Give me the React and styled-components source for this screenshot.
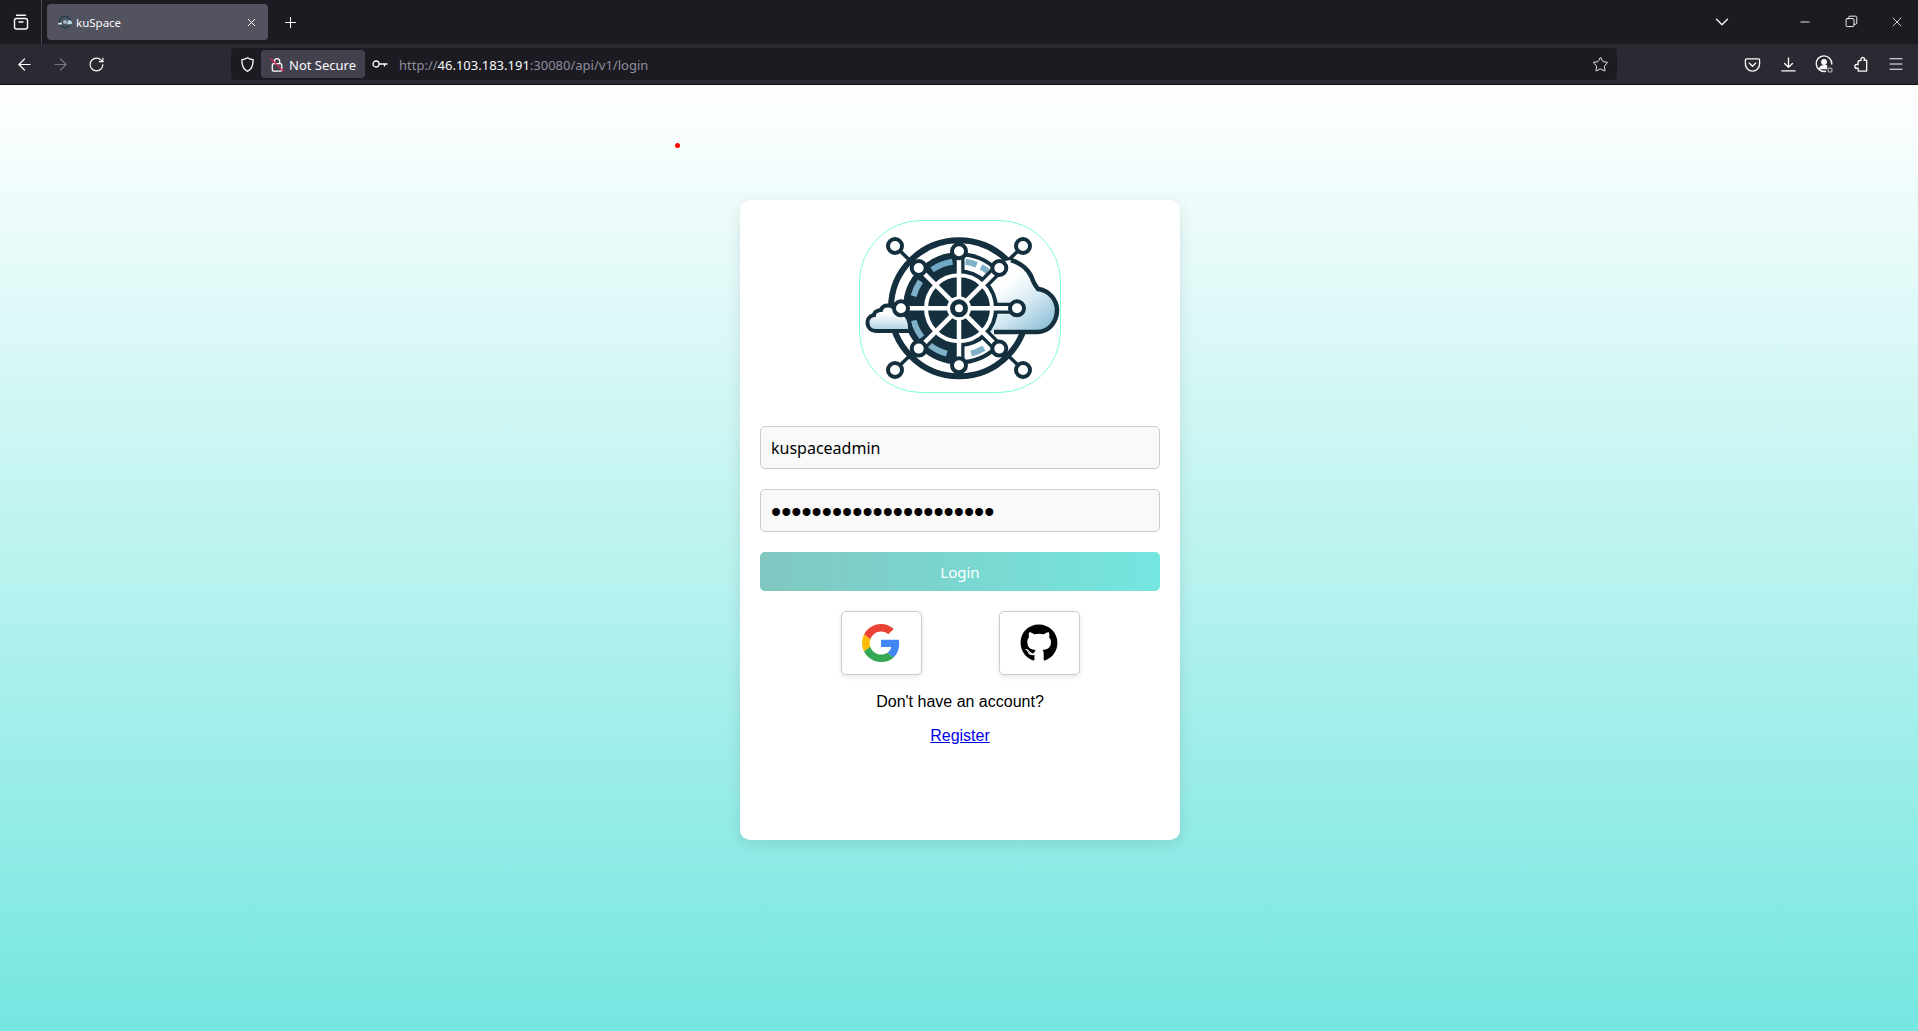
import React from 'react';
import styled, { createGlobalStyle } from 'styled-components';
import { ArrowLeft, ArrowRight, RotateCw, Star, Menu, ChevronDown, Minus, X, Plus } from 'lucide-react';
import { FaGithub } from 'react-icons/fa';

const GlobalStyle = createGlobalStyle`
  html, body {
    margin: 0;
    padding: 0;
    width: 1918px;
    height: 1031px;
    overflow: hidden;
    font-family: "Liberation Sans", Arial, sans-serif;
  }
  * { box-sizing: border-box; }
`;

const Window = styled.div`
  display: flex;
  flex-direction: column;
  width: 1918px;
  height: 1031px;
  overflow: hidden;
`;

/* browser chrome */
const TabBar = styled.div`
  display: flex;
  align-items: center;
  height: 44px;
  margin-right: -2px;
  background: #1c1b22;
  color: #fbfbfe;
  font-family: "Noto Sans", sans-serif;
`;

const ViewButton = styled.div`
  display: flex;
  align-items: center;
  justify-content: center;
  width: 42px;
  height: 44px;
  margin-right: 5px;
  border-right: 1px solid #4a4a52;
`;

const Tab = styled.div`
  display: flex;
  align-items: center;
  width: 221px;
  height: 36px;
  padding: 0 10px;
  gap: 3px;
  border-radius: 4px;
  background: #53535f;
  font-size: 11.5px;
`;

const TabTitle = styled.span`
  flex: 1;
`;

const NewTab = styled.div`
  display: flex;
  align-items: center;
  justify-content: center;
  width: 44px;
`;

const Spacer = styled.div`
  flex: 1;
`;

const WinButton = styled.div`
  display: flex;
  align-items: center;
  justify-content: center;
  width: ${props => props.$w || 46}px;
  margin-top: -1px;
`;

const ToolBar = styled.div`
  display: flex;
  align-items: center;
  height: 41px;
  padding-left: 6px;
  background: #2b2a33;
  border-bottom: 1px solid #0c0c0d;
  color: #fbfbfe;
  font-family: "Noto Sans", sans-serif;
`;

const ToolIcon = styled.div`
  display: flex;
  align-items: center;
  justify-content: center;
  width: 36px;
  height: 32px;
  color: ${props => (props.$dim ? '#75747b' : '#fbfbfe')};
`;

const UrlBar = styled.div`
  display: flex;
  align-items: center;
  width: 1386px;
  height: 32px;
  margin-left: 117px;
  margin-right: 117px;
  padding: 0 8px 0 2px;
  border-radius: 4px;
  background: #1c1b22;
`;

const ShieldSlot = styled.div`
  display: flex;
  align-items: center;
  justify-content: center;
  width: 28px;
`;

const SecurityBox = styled.div`
  display: flex;
  align-items: center;
  gap: 3px;
  width: 104px;
  height: 28px;
  padding: 1px 0 0 8px;
  border-radius: 4px;
  background: #42414d;
  font-size: 13px;
  white-space: nowrap;
`;

const KeySlot = styled.div`
  display: flex;
  align-items: center;
  margin: 0 11px 0 7px;
`;

const UrlText = styled.div`
  flex: 1;
  padding-top: 1px;
  font-size: 13px;
  color: #8f8f9d;
  white-space: nowrap;
`;

const Host = styled.span`
  color: #fbfbfe;
`;

/* login page */
const Page = styled.main`
  flex: 1;
  position: relative;
  display: flex;
  justify-content: center;
  padding: 115px 0 0 2px;
  background: linear-gradient(to bottom, #ffffff 0%, #75e6e0 100%);
`;

const RedDot = styled.div`
  position: absolute;
  left: 675px;
  top: 58px;
  width: 5px;
  height: 5px;
  border-radius: 50%;
  background: #f00;
`;

const Card = styled.section`
  display: flex;
  flex-direction: column;
  align-items: center;
  width: 440px;
  height: 640px;
  padding: 20px;
  border-radius: 10px;
  background: #fff;
  box-shadow: 0 4px 15px rgba(0, 0, 0, 0.1);
`;

const LogoFrame = styled.div`
  width: 202px;
  height: 173px;
  margin-bottom: 33px;
  border: 1px solid #7fffd4;
  border-radius: 62px;
  background: #fff;
  overflow: hidden;
`;

const Field = styled.input`
  width: 400px;
  height: 43px;
  margin-bottom: 20px;
  padding: 0 10px;
  border: 1px solid #ccc;
  border-radius: 5px;
  background: #f9f9f9;
  color: #000;
  font-family: "Noto Sans", sans-serif;
  font-size: 16px;
  outline: none;
`;

const PasswordField = styled(Field)`
  padding-top: 3px;
  font-family: "Liberation Sans", sans-serif;
  font-size: 29px;
`;

const LoginButton = styled.button`
  width: 400px;
  height: 39px;
  margin-bottom: 20px;
  border: none;
  border-radius: 5px;
  background: linear-gradient(to right, #80c7c0, #75e6e0);
  color: #fff;
  font-family: "Noto Sans", sans-serif;
  font-size: 15px;
`;

const SocialRow = styled.div`
  display: flex;
  justify-content: center;
  gap: 77px;
  margin-bottom: 18px;
`;

const SocialButton = styled.button`
  display: flex;
  align-items: center;
  justify-content: center;
  width: 81px;
  height: 64px;
  padding: 0;
  border: 1px solid #ccc;
  border-radius: 5px;
  background: #fff;
  box-shadow: 0 2px 5px rgba(0, 0, 0, 0.1);
`;

const Prompt = styled.p`
  margin: 0 0 16px;
  font-size: 16px;
  line-height: 18px;
  color: #000;
`;

const RegisterLink = styled.a`
  font-size: 16px;
  line-height: 18px;
  color: #00e;
  text-decoration: underline;
`;

const Icon = ({ size = 18, children, sw = 1.4 }) => (
  <svg width={size} height={size} viewBox="0 0 18 18" fill="none" stroke="currentColor" strokeWidth={sw} strokeLinecap="round" strokeLinejoin="round">
    {children}
  </svg>
);

const CX = 100;
const CY = 88.3;
const DARK = '#14303f';

const polar = (r, a) => [CX + r * Math.cos((a * Math.PI) / 180), CY + r * Math.sin((a * Math.PI) / 180)];

// clockwise arc from angle a0 to a1, in degrees
const arc = (r, a0, a1) => {
  const [x0, y0] = polar(r, a0);
  const [x1, y1] = polar(r, a1);
  return `M${x0} ${y0}A${r} ${r} 0 ${a1 - a0 > 180 ? 1 : 0} 1 ${x1} ${y1}`;
};

const wheelNodes = [0, 45, 90, 135, 180, 225, 270, 315].map(a => polar(a % 180 === 0 ? 58 : 57, a));
const outerNodes = [[36, 26], [164, 26], [36, 150], [164, 150]];
const dashes = [[142, 165], [195, 215], [235, 262], [278, 292], [298, 308], [58, 75], [105, 130]];

function Logo() {
  return (
    <svg width="200" height="171" viewBox="1 1 200 171">
      <defs>
        <linearGradient id="cloudA" x1="0.2" y1="0.1" x2="0.9" y2="1">
          <stop offset="0.2" stopColor="#ffffff" />
          <stop offset="0.55" stopColor="#d5e9f2" />
          <stop offset="1" stopColor="#86bad4" />
        </linearGradient>
        <linearGradient id="cloudB" x1="0" y1="0" x2="0" y2="1">
          <stop offset="0.3" stopColor="#ffffff" />
          <stop offset="1" stopColor="#a9cfe0" />
        </linearGradient>
      </defs>
      {outerNodes.map(([x, y]) => (
        <g key={x + '-' + y}>
          <line x1={x} y1={y} x2={CX} y2={CY} stroke={DARK} strokeWidth="3.5" />
          <circle cx={x} cy={y} r="7" fill="#fff" stroke={DARK} strokeWidth="4" />
        </g>
      ))}
      <circle cx={CX} cy={CY} r="68" fill="#fff" stroke={DARK} strokeWidth="6" />
      <path d="M128 44 L152 40 C162 43 170 50 173 58 C174 62 176 65 179 69 C190 70 198 80 198 90 C198 102 190 112 178 112 L125 112 Z" fill="url(#cloudA)" />
      <path d="M152 40 C162 43 170 50 173 58 C174 62 176 65 179 69 C190 70 198 80 198 90 C198 102 190 112 178 112 L135 112" fill="none" stroke={DARK} strokeWidth="4.5" />
      {/* dark band on the left half, thin arcs on the right */}
      <path d={arc(46.5, 90, 270)} fill="none" stroke={DARK} strokeWidth="19" />
      <path d={arc(54, 270, 315)} fill="none" stroke={DARK} strokeWidth="4" />
      <path d={arc(54, 45, 90)} fill="none" stroke={DARK} strokeWidth="4" />
      {dashes.map(([a0, a1]) => (
        <path key={a0} d={arc(47, a0, a1)} fill="none" stroke={a0 === 235 ? '#6fa9c4' : '#7fb0c8'} strokeWidth="6" />
      ))}
      {wheelNodes.map(([x, y], i) => (
        <line key={i} x1={x} y1={y} x2={CX} y2={CY} stroke={DARK} strokeWidth="11" />
      ))}
      <circle cx={CX} cy={CY} r="39" fill={DARK} />
      <circle cx={CX} cy={CY} r="33" fill={DARK} stroke="#fff" strokeWidth="4" />
      {wheelNodes.map(([x, y], i) => (
        <line key={i} x1={x} y1={y} x2={CX} y2={CY} stroke="#fff" strokeWidth="4.5" />
      ))}
      <path d="M22 90 C24 84 34 84 37 91 C45 91 52 98 51 111 L17 111 C7 111 5 97 15 95 C15 92 19 90 22 90 Z" fill="url(#cloudB)" stroke={DARK} strokeWidth="4" />
      {wheelNodes.map(([x, y], i) => (
        <circle key={i} cx={x} cy={y} r="7" fill="#fff" stroke={DARK} strokeWidth="4" />
      ))}
      <circle cx={CX} cy={CY} r="12" fill="#fff" />
      <circle cx={CX} cy={CY} r="6.5" fill="#fff" stroke={DARK} strokeWidth="5" />
    </svg>
  );
}

function GoogleIcon() {
  return (
    <svg width="38" height="38" viewBox="0 0 48 48">
      <path fill="#EA4335" d="M24 9.5c3.54 0 6.71 1.22 9.21 3.6l6.85-6.85C35.9 2.38 30.47 0 24 0 14.62 0 6.51 5.38 2.56 13.22l7.98 6.19C12.43 13.72 17.74 9.5 24 9.5z" />
      <path fill="#4285F4" d="M46.98 24.55c0-1.57-.15-3.09-.38-4.55H24v9.02h12.94c-.58 2.96-2.26 5.48-4.78 7.18l7.73 6c4.51-4.18 7.09-10.36 7.09-17.65z" />
      <path fill="#FBBC05" d="M10.53 28.59c-.48-1.45-.76-2.99-.76-4.59s.27-3.14.76-4.59l-7.98-6.19C.92 16.46 0 20.12 0 24c0 3.88.92 7.54 2.56 10.78l7.97-6.19z" />
      <path fill="#34A853" d="M24 48c6.48 0 11.93-2.13 15.89-5.81l-7.73-6c-2.15 1.45-4.92 2.3-8.16 2.3-6.26 0-11.57-4.22-13.47-9.91l-7.98 6.19C6.51 42.62 14.62 48 24 48z" />
    </svg>
  );
}

function FavIcon() {
  return (
    <svg width="16" height="16" viewBox="0 0 16 16">
      <circle cx="8" cy="8" r="5.6" fill="none" stroke="#23414f" strokeWidth="1.6" />
      <circle cx="8" cy="8" r="2" fill="#9fb6c0" />
      <path d="M11 6.5c2-.8 4 .3 4 2.2 0 1-.7 1.6-1.6 1.6H10z" fill="#b6d8e6" />
      <path d="M1 10.2c0-1 1-1.6 2-1.3.6-.6 1.8-.3 2 .5v1.2H2c-.6 0-1-.1-1-.4z" fill="#dcecf2" />
    </svg>
  );
}

export default function App() {
  return (
    <Window>
      <GlobalStyle />
      <TabBar>
        <ViewButton>
          <Icon>
            <rect x="2.5" y="5.5" width="13" height="10.5" rx="2" />
            <path d="M4.5 2.2h9M7 9h4" />
          </Icon>
        </ViewButton>
        <Tab>
          <FavIcon />
          <TabTitle>kuSpace</TabTitle>
          <X size={13} strokeWidth={1.8} />
        </Tab>
        <NewTab>
          <Plus size={17} strokeWidth={1.5} />
        </NewTab>
        <Spacer />
        <WinButton $w={40}>
          <ChevronDown size={22} strokeWidth={1.4} />
        </WinButton>
        <WinButton $w={40} />
        <WinButton>
          <Minus size={14} strokeWidth={1.5} />
        </WinButton>
        <WinButton>
          <Icon size={13} sw={1.3}>
            <rect x="1.5" y="5" width="11" height="11" rx="1.5" />
            <path d="M5 5V3.4C5 2.3 5.7 1.6 6.8 1.6h7.7c1.1 0 1.8.7 1.8 1.8V11c0 1.1-.7 1.8-1.8 1.8h-2" />
          </Icon>
        </WinButton>
        <WinButton>
          <X size={16} strokeWidth={1.2} />
        </WinButton>
      </TabBar>
      <ToolBar>
        <ToolIcon><ArrowLeft size={19} strokeWidth={1.5} /></ToolIcon>
        <ToolIcon $dim><ArrowRight size={19} strokeWidth={1.5} /></ToolIcon>
        <ToolIcon><RotateCw size={17} strokeWidth={1.6} /></ToolIcon>
        <UrlBar>
          <ShieldSlot>
            <Icon size={17}>
              <path d="M9 1.8c2 1.3 4 2 6 2.2 0 5.5-1 10-6 12.2C4 14 3 9.5 3 4c2-.2 4-.9 6-2.2z" />
            </Icon>
          </ShieldSlot>
          <SecurityBox>
            <Icon size={17}>
              <rect x="3.5" y="8" width="10" height="8" rx="1.5" />
              <path d="M5.8 8V5a2.8 2.8 0 0 1 5.5 0v3" />
              <path d="M2 3l13 13" stroke="#e22850" />
            </Icon>
            Not Secure
          </SecurityBox>
          <KeySlot>
            <svg width="16" height="10" viewBox="0 0 16 10" fill="none" stroke="currentColor" strokeWidth="1.3">
              <circle cx="4" cy="5" r="3" />
              <path d="M7 5h8.5M12.5 5v2.5" />
            </svg>
          </KeySlot>
          <UrlText>http://<Host>46.103.183.191</Host>:30080/api/v1/login</UrlText>
          <Star size={17} strokeWidth={1.3} />
        </UrlBar>
        <ToolIcon>
          <Icon size={17}>
            <path d="M2.5 3h13c.6 0 1 .4 1 1v4.5c0 4.2-3.3 7.5-7.5 7.5S1.5 12.7 1.5 8.5V4c0-.6.4-1 1-1z" />
            <path d="M5.5 7.5 9 10.8l3.5-3.3" />
          </Icon>
        </ToolIcon>
        <ToolIcon>
          <Icon size={17}>
            <path d="M9 2v10M4.8 8 9 12l4.2-4M2 15.8h14" />
          </Icon>
        </ToolIcon>
        <ToolIcon>
          <Icon size={18}>
            <path d="M10.5 16.3A7.8 7.8 0 1 1 16.8 9" />
            <circle cx="9" cy="7" r="2.2" fill="currentColor" />
            <path d="M4.5 13c1-1.7 2.7-2.2 4.5-2.2h2.5v2.7H5z" fill="currentColor" />
            <circle cx="15" cy="15" r="2" stroke="#9a9aa3" />
          </Icon>
        </ToolIcon>
        <ToolIcon>
          <Icon size={17}>
            <path d="M9.5 4.5V3.3a2 2 0 0 1 3-1.4c1 .6 1 2 0 2.6h3v11.5H6.5v-3H5a2 2 0 1 1 0-4h1.5V5.5z" />
          </Icon>
        </ToolIcon>
        <ToolIcon>
          <Menu size={18} strokeWidth={1.4} />
        </ToolIcon>
      </ToolBar>
      <Page>
        <RedDot />
        <Card>
          <LogoFrame>
            <Logo />
          </LogoFrame>
          <Field type="text" defaultValue="kuspaceadmin" readOnly />
          <PasswordField type="password" defaultValue="kuspaceadmin1234567890" readOnly />
          <LoginButton>Login</LoginButton>
          <SocialRow>
            <SocialButton><GoogleIcon /></SocialButton>
            <SocialButton><FaGithub size={38} color="#000" /></SocialButton>
          </SocialRow>
          <Prompt>Don't have an account?</Prompt>
          <RegisterLink href="#register">Register</RegisterLink>
        </Card>
      </Page>
    </Window>
  );
}
